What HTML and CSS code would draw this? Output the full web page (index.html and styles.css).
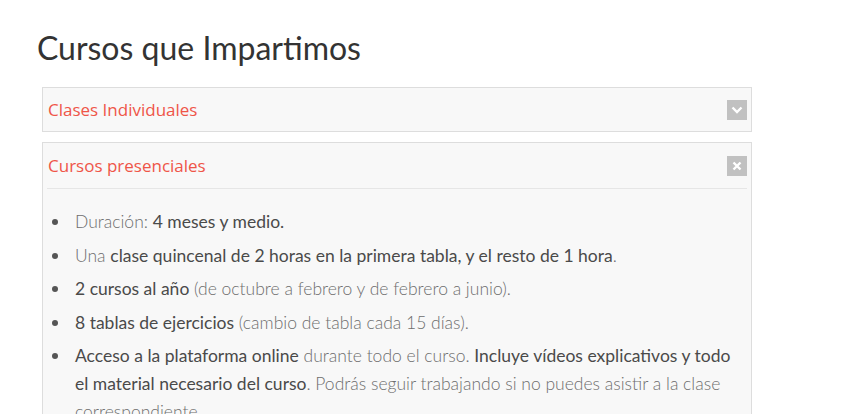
FILE: index.html
```html
<!DOCTYPE html>
<html lang="es">
<head>
  <meta charset="UTF-8" />
  <meta name="viewport" content="width=device-width, initial-scale=1.0" />
  <title>Cursos que Impartimos</title>
  <link rel="stylesheet" href="styles.css">
</head>
<body>
  <div class="container">
    <h2 class="section-title">Cursos que Impartimos</h2>

    <div class="panel">
      <div class="panel-head">
        <span class="panel-title">Clases Individuales</span>
        <span class="toggle">
          <svg width="12" height="8" viewBox="0 0 12 8"><path d="M1.5 1.5 L6 6 L10.5 1.5" fill="none" stroke="#fff" stroke-width="2.4"/></svg>
        </span>
      </div>
    </div>

    <div class="panel open">
      <div class="panel-head">
        <span class="panel-title">Cursos presenciales</span>
        <span class="toggle">
          <svg width="10" height="10" viewBox="0 0 10 10"><path d="M1.5 1.5 L8.5 8.5 M8.5 1.5 L1.5 8.5" fill="none" stroke="#fff" stroke-width="2.4"/></svg>
        </span>
      </div>
      <div class="panel-body">
        <ul class="features">
          <li>Duración: <strong>4 meses y medio.</strong></li>
          <li>Una <strong>clase quincenal de 2 horas en la primera tabla, y el resto de 1 hora</strong>.</li>
          <li><strong>2 cursos al año</strong> (de octubre a febrero y de febrero a junio).</li>
          <li><strong>8 tablas de ejercicios</strong> (cambio de tabla cada 15 días).</li>
          <li><strong>Acceso a la plataforma online</strong> durante todo el curso. <strong>Incluye vídeos explicativos y todo el material necesario del curso</strong>. Podrás seguir trabajando si no puedes asistir a la clase correspondiente.</li>
        </ul>
      </div>
    </div>
  </div>
</body>
</html>
```

FILE: styles.css
```css
* { box-sizing: border-box; }
body { margin: 0; background: #fff; font-family: Lato, "Liberation Sans", sans-serif; color: #666; }
.container { width: 760px; padding: 28px 0 0 37px; }
.section-title { margin: 0 0 19px; font-family: Lato, sans-serif; font-weight: 400; font-size: 32px; line-height: 40px; color: #333; }
.panel { margin: 0 0 10px 5px; width: 710px; background: #f8f8f8; border: 1px solid #dddddd; padding: 0 4px; }
.panel-head { display: flex; align-items: center; justify-content: space-between; height: 43px; padding-left: 1px; }
.open .panel-head { height: 46px; border-bottom: 1px solid #e6e6e6; }
.panel-title { font-family: "Open Sans", sans-serif; font-size: 17px; color: #ef5548; }
.toggle { width: 20px; height: 20px; background: #c1c1c1; display: flex; align-items: center; justify-content: center; }
.panel-body { padding: 19px 0 0; }
.features { margin: 0; padding-left: 28px; list-style: none; font-size: 17.5px; line-height: 28px; font-weight: 300; color: #6e6e6e; }
.features li { position: relative; margin-bottom: 5.5px; }
.features li::before { content: ""; position: absolute; left: -23px; top: 11px; width: 6px; height: 6px; border-radius: 50%; background: #555; }
.features strong { font-weight: 400; color: #4a4a4a; }
```
